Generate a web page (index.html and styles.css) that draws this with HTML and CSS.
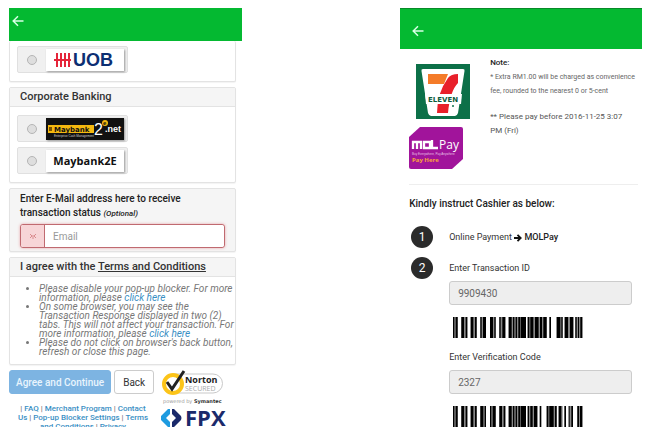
FILE: index.html
```
<!DOCTYPE html>
<html lang="en">
<head>
  <meta charset="UTF-8">
  <meta name="viewport" content="width=device-width, initial-scale=1.0">
  <title>Payment</title>
  <link rel="stylesheet" href="styles.css">
</head>
<body>
  <main class="screens">

    <!-- Online banking screen -->
    <section class="screen bank">
      <header class="topbar">
        <button type="button" class="back-arrow" aria-label="Go back">
          <svg width="12" height="12" viewBox="0 0 12 12"><path d="M11.500 6H1.500M6 1.200L1.200 6L6 10.800" fill="none" stroke="#d9ffe6" stroke-width="1.500"/></svg>
        </button>
      </header>

      <div class="panel panel-first">
        <div class="panel-body">
          <label class="bank-option">
            <span class="addon"><input type="radio" name="bank" aria-label="UOB"></span>
            <span class="logo">
              <svg width="78" height="23" viewBox="0 0 78 23">
                <path d="M11 4V18M15 4V18M19 4V18M23 4V18M8 11H25" stroke="#e5253a" stroke-width="2"/>
                <text x="27" y="17" class="uob-text">UOB</text>
              </svg>
            </span>
          </label>
        </div>
      </div>

      <div class="panel">
        <h2 class="panel-heading">Corporate Banking</h2>
        <div class="panel-body">
          <label class="bank-option">
            <span class="addon"><input type="radio" name="bank" aria-label="Maybank2e.net"></span>
            <span class="logo logo-dark">
              <svg width="78" height="21" viewBox="0 0 78 21">
                <rect x="2" y="7" width="46" height="8" fill="#f5b90f"/>
                <path d="M3 9h3v4h-3z" fill="#7a5200"/>
                <text x="8" y="14" class="maybank-text">Maybank</text>
                <text x="8" y="19" class="maybank-small">Enterprise Cash Management</text>
                <text x="48" y="17" class="maybank-two">2</text>
                <circle cx="59" cy="5" r="3" fill="#f5b90f"/>
                <text x="57" y="7" class="maybank-e">e</text>
                <text x="59" y="14" class="maybank-net">.net</text>
              </svg>
            </span>
          </label>
          <label class="bank-option">
            <span class="addon"><input type="radio" name="bank" aria-label="Maybank2E"></span>
            <span class="logo logo-text">Maybank2E</span>
          </label>
        </div>
      </div>

      <div class="panel email-panel">
        <label for="email">Enter E-Mail address here to receive transaction status <em>(Optional)</em></label>
        <div class="email-group">
          <span class="email-addon">
            <svg width="8" height="6" viewBox="0 0 8 6"><path d="M1 1L3 3L1 5M7 1L5 3L7 5M3 3H5M3 5H5" fill="none" stroke="#d98a8d" stroke-width="1"/></svg>
          </span>
          <input type="email" id="email" placeholder="Email">
        </div>
      </div>

      <div class="panel">
        <h2 class="panel-heading">I agree with the <a href="#terms">Terms and Conditions</a></h2>
        <ul class="notes">
          <li>Please disable your pop-up blocker. For more information, please <a href="#popup">click here</a></li>
          <li>On some browser, you may see the Transaction Response displayed in two (2) tabs. This will not affect your transaction. For more information, please <a href="#tabs">click here</a></li>
          <li>Please do not click on browser's back button, refresh or close this page.</li>
        </ul>
      </div>

      <div class="bottom">
        <div class="bottom-left">
          <div class="buttons">
            <button type="button" class="btn btn-primary">Agree and Continue</button>
            <button type="button" class="btn">Back</button>
          </div>
          <p class="links">| <a href="#faq">FAQ</a> | <a href="#merchant">Merchant Program</a> | <a href="#contact">Contact Us</a> | <a href="#settings">Pop-up Blocker Settings</a> | <a href="#tnc">Terms and Conditions</a> | <a href="#privacy">Privacy</a></p>
        </div>
        <div class="badges">
          <svg width="66" height="35" viewBox="0 0 66 35">
            <path d="M12 4H52A9 9 0 0 1 52 23H12" fill="#fff" stroke="#c9c9c9"/>
            <circle cx="12" cy="14" r="9" fill="#fff" stroke="#fcc419" stroke-width="4"/>
            <path d="M6 12L11 19L23 1" fill="none" stroke="#222" stroke-width="3"/>
            <text x="24" y="13" class="norton">Norton</text>
            <text x="24" y="21" class="secured">SECURED</text>
            <text x="2" y="33" class="powered">powered by <tspan class="symantec">Symantec</tspan></text>
          </svg>
          <svg width="68" height="20" viewBox="0 0 68 20">
            <path d="M9 1H7L0 8Q-1 10 0 12L7 19H9V14L5 10L9 6Z" fill="#1e9be0"/>
            <path d="M11 1H13L20 8Q21 10 20 12L13 19H11V14L15 10L11 6Z" fill="#1b2a6b"/>
            <text x="24" y="18" class="fpx">FPX</text>
          </svg>
        </div>
      </div>
    </section>

    <!-- Cash payment screen -->
    <section class="screen cash">
      <header class="topbar topbar-tall">
        <button type="button" class="back-arrow" aria-label="Go back">
          <svg width="12" height="12" viewBox="0 0 12 12"><path d="M11.500 6H1.500M6 1.200L1.200 6L6 10.800" fill="none" stroke="#d9ffe6" stroke-width="1.500"/></svg>
        </button>
      </header>

      <div class="intro">
        <div class="providers">
          <svg class="seven" width="54" height="55" viewBox="0 0 54 55">
            <rect width="54" height="55" fill="#0c7048"/>
            <path d="M7 5H47Q49 5 48.500 7L42 49Q41 52 39 52H15Q13 52 12 49L5.500 7Q5 5 7 5Z" fill="#fff"/>
            <path d="M12 10H32L28 20H12Z" fill="#f47b29"/>
            <path d="M32 14Q35 10 42 10V19Q34 27 32 49H21Q21 29 32 14Z" fill="#e8202a"/>
            <path d="M9 30H46L45 40H10Z" fill="#fff"/>
            <text x="27" y="38" class="eleven">ELEVEN</text>
            <circle cx="37" cy="42" r="1" fill="#0c7048"/>
          </svg>
          <svg width="54" height="43" viewBox="0 0 54 43">
            <path d="M11 0H52Q54 0 54 2V32L43 42H2Q0 42 0 40V10Z" fill="#a1149b"/>
            <path d="M4 22V15H12V22M8 15V22M15 15H21V21H15ZM23 13V21H29" fill="none" stroke="#fff" stroke-width="2.300"/>
            <text x="30" y="22" class="mol-pay">Pay</text>
            <text x="3" y="28" class="mol-small">Buy Everywhere, Pay Anywhere</text>
            <text x="3" y="35" class="mol-here">Pay Here</text>
          </svg>
        </div>
        <div class="note">
          <h2>Note:</h2>
          <p class="note-small">* Extra RM1.00 will be charged as convenience fee, rounded to the nearest 0 or 5-cent</p>
          <p class="note-due">** Please pay before 2016-11-25 3:07 PM (Fri)</p>
        </div>
      </div>

      <div class="steps">
        <h2>Kindly instruct Cashier as below:</h2>
        <div class="step">
          <span class="num">1</span>
          <p>Online Payment
            <svg width="8" height="8" viewBox="0 0 8 8"><path d="M0 4H6M3.500 0.800L6.700 4L3.500 7.200" fill="none" stroke="#111" stroke-width="1.800"/></svg>
            <b>MOLPay</b></p>
        </div>
        <div class="step">
          <span class="num">2</span>
          <div class="fields">
            <label for="transaction">Enter Transaction ID</label>
            <input type="text" id="transaction" value="9909430" readonly>
            <svg class="barcode" width="130" height="21" viewBox="0 0 390 63" preserveAspectRatio="none">
              <path class="bar-shade" d="M0 0h14v63h-14zM25 0h18v63h-18zM53 0h18v63h-18zM82 0h17v63h-17zM111 0h17v63h-17zM139 0h18v63h-18zM167 0h52v63h-52zM224 0h33v63h-33zM260 0h21v63h-21zM311 0h18v63h-18zM335 0h26v63h-26zM367 0h21v63h-21z"/>
              <path d="M0 0h4v63h-4zM8 0h6v63h-6zM25 0h8v63h-8zM38 0h5v63h-5zM53 0h8v63h-8zM66 0h5v63h-5zM82 0h4v63h-4zM90 0h9v63h-9zM111 0h9v63h-9zM124 0h4v63h-4zM139 0h4v63h-4zM148 0h9v63h-9zM167 0h9v63h-9zM180 0h4v63h-4zM188 0h4v63h-4zM196 0h5v63h-5zM203 0h16v63h-16zM224 0h5v63h-5zM232 0h9v63h-9zM246 0h11v63h-11zM260 0h7v63h-7zM271 0h10v63h-10zM289 0h5v63h-5zM311 0h11v63h-11zM325 0h4v63h-4zM335 0h10v63h-10zM351 0h10v63h-10zM367 0h4v63h-4zM375 0h3v63h-3zM382 0h6v63h-6z"/>
            </svg>
            <label for="verification">Enter Verification Code</label>
            <input type="text" id="verification" value="2327" readonly>
            <svg class="barcode" width="130" height="21" viewBox="0 0 390 63" preserveAspectRatio="none">
              <path class="bar-shade" d="M0 0h14v63h-14zM25 0h18v63h-18zM53 0h18v63h-18zM82 0h17v63h-17zM111 0h17v63h-17zM139 0h18v63h-18zM167 0h52v63h-52zM224 0h29v63h-29zM281 0h30v63h-30zM317 0h12v63h-12zM347 0h13v63h-13zM373 0h15v63h-15z"/>
              <path d="M0 0h4v63h-4zM8 0h6v63h-6zM25 0h8v63h-8zM38 0h5v63h-5zM53 0h8v63h-8zM66 0h5v63h-5zM82 0h9v63h-9zM95 0h4v63h-4zM111 0h4v63h-4zM119 0h9v63h-9zM139 0h8v63h-8zM152 0h5v63h-5zM167 0h9v63h-9zM180 0h4v63h-4zM188 0h4v63h-4zM196 0h5v63h-5zM203 0h16v63h-16zM224 0h4v63h-4zM232 0h7v63h-7zM243 0h10v63h-10zM260 0h5v63h-5zM281 0h5v63h-5zM289 0h13v63h-13zM306 0h5v63h-5zM317 0h8v63h-8zM334 0h5v63h-5zM347 0h3v63h-3zM355 0h5v63h-5zM373 0h5v63h-5zM381 0h7v63h-7z"/>
            </svg>
          </div>
        </div>
      </div>
    </section>

  </main>
</body>
</html>
```
FILE: styles.css
```
* {
  box-sizing: border-box;
}

body {
  margin: 0;
  background: #fff;
  font-family: Roboto, "Liberation Sans", sans-serif;
  font-size: 10px;
  color: #333;
}

h2, p, ul {
  margin: 0;
}

button, input {
  font-family: inherit;
}

a {
  color: #3a8fc4;
  text-decoration: none;
}

.screens {
  display: grid;
  grid-template-columns: 233fr 242fr;
  column-gap: 25%;
  align-items: start;
  padding: 8px 8px 0 9px;
}

/* Green bar */
.topbar {
  display: flex;
  align-items: center;
  height: 33px;
  padding: 0 3px 7px;
  background: #04b931;
}

.topbar-tall {
  height: 41px;
  padding: 3px 12px 0;
  border-top: 1px solid #078a28;
}

.back-arrow {
  display: flex;
  padding: 0;
  border: none;
  background: none;
}

/* Panels */
.panel {
  margin: 0 6px 5px 0;
  border: 1px solid #e3e3e3;
  border-radius: 2px;
  background: #fff;
  box-shadow: 0 1px 1px rgba(0, 0, 0, 0.05);
}

.panel-first {
  border-top: none;
}

.panel-heading {
  padding: 0 10px;
  border-bottom: 1px solid #e3e3e3;
  background: #f5f5f5;
  font-size: 11px;
  font-weight: 500;
  line-height: 18px;
}

.panel-heading a {
  color: #333;
  text-decoration: underline;
}

.panel-body {
  display: flex;
  flex-direction: column;
  align-items: flex-start;
  gap: 5px;
  padding: 8px 7px;
}

.panel-first .panel-body {
  padding-top: 5px;
}

.bank-option {
  display: flex;
  align-items: center;
  height: 27px;
  border: 1px solid #e0e0e0;
  border-radius: 2px;
  background: #f0f0f0;
}

.addon {
  display: flex;
  justify-content: center;
  width: 28px;
}

.addon input {
  appearance: none;
  width: 10px;
  height: 10px;
  margin: 0;
  border: 1px solid #b5b5b5;
  border-radius: 50%;
  background: #dedede;
}

.logo {
  display: flex;
  width: 78px;
  height: 22px;
  margin-right: 3px;
  background: #fff;
  box-shadow: 1px 1px 2px #999;
}

.logo-dark {
  background: #111;
}

.logo-text {
  align-items: center;
  justify-content: center;
  font-family: "Open Sans", sans-serif;
  font-size: 11px;
  font-weight: bold;
  color: #111;
}

.uob-text {
  font: bold 18px "Liberation Sans", sans-serif;
  fill: #0c2f73;
}

.maybank-text {
  font: bold 7px "DejaVu Sans", sans-serif;
  fill: #111;
}

.maybank-small {
  font: 3px "Liberation Sans", sans-serif;
  fill: #ccc;
}

.maybank-two {
  font: 16px "Liberation Sans", sans-serif;
  fill: #fff;
}

.maybank-e {
  font: bold 6px "Liberation Sans", sans-serif;
  fill: #111;
}

.maybank-net {
  font: bold 9px "Liberation Sans", sans-serif;
  fill: #fff;
}

/* Email */
.email-panel {
  padding: 3px 10px;
  background: #f5f5f5;
}

.email-panel label {
  display: block;
  margin-bottom: 3px;
  font-size: 10px;
  font-weight: 500;
  line-height: 14px;
  color: #222;
}

.email-panel em {
  font-size: 8px;
}

.email-group {
  display: flex;
  height: 24px;
  border: 1px solid #c06a70;
  border-radius: 3px;
  background: #fff;
  box-shadow: 0 0 3px #e9a5a9;
}

.email-addon {
  display: flex;
  align-items: center;
  justify-content: center;
  width: 24px;
  border-right: 1px solid #c06a70;
  border-radius: 2px 0 0 2px;
  background: #f7d5d7;
}

.email-group input {
  flex: 1;
  min-width: 0;
  padding: 0 8px;
  border: none;
  border-radius: 3px;
  font-size: 10px;
}

.email-group input::placeholder {
  color: #999;
}

.notes {
  padding: 7px 0 8px 29px;
  font-size: 10px;
  font-style: italic;
  line-height: 9px;
  color: #777;
}

/* Buttons, links and badges */
.bottom {
  display: flex;
  gap: 8px;
}

.bottom-left {
  width: 144px;
}

.buttons {
  display: flex;
  gap: 3px;
}

.btn {
  height: 24px;
  padding: 0 8px;
  border: 1px solid #ccc;
  border-radius: 3px;
  background: #fff;
  font-size: 10px;
  color: #333;
  white-space: nowrap;
}

.btn-primary {
  padding: 0 6px;
  border-color: #7db4e2;
  background: #7db4e2;
  color: #e9f4fd;
  font-weight: 500;
}

.links {
  max-height: 23px;
  margin-top: 10px;
  padding: 0 2px 0 6px;
  overflow: hidden;
  font-size: 8px;
  font-weight: 500;
  line-height: 9px;
  text-align: center;
  color: #777;
}

.badges {
  display: flex;
  flex-direction: column;
  gap: 3px;
}

.badges svg {
  display: block;
}

.norton {
  font: bold 9px "Open Sans", sans-serif;
  fill: #222;
}

.secured {
  font: 7px "Open Sans", sans-serif;
  fill: #aaa;
}

.powered {
  font: 5px "DejaVu Sans", sans-serif;
  fill: #999;
}

.symantec {
  font-weight: bold;
  fill: #333;
}

.fpx {
  font: bold 22px "Open Sans", sans-serif;
  fill: #1b2a6b;
}

/* Cash screen */
.intro {
  display: flex;
  gap: 20px;
  margin: 0 4px 0 9px;
  padding: 7px 0 14px;
  border-bottom: 1px solid #eee;
}

.providers {
  display: flex;
  flex-direction: column;
  gap: 8px;
  padding-top: 8px;
}

.providers svg {
  display: block;
}

.seven {
  margin-left: 7px;
}

.eleven {
  font: bold 7px "DejaVu Sans", sans-serif;
  fill: #0c5c3c;
  text-anchor: middle;
}

.mol-pay {
  font: 12px "Open Sans", sans-serif;
  fill: #fff;
}

.mol-small {
  font: 3px "Liberation Sans", sans-serif;
  fill: #e8c4e6;
}

.mol-here {
  font: bold 6px "Open Sans", sans-serif;
  fill: #f9a23c;
}

.note {
  flex: 1;
  line-height: 14px;
}

.note h2 {
  font-size: 8px;
  font-weight: 500;
  line-height: 14px;
  color: #222;
}

.note-small {
  font-size: 7px;
  color: #666;
}

.note-due {
  margin-top: 12px;
  padding-right: 8px;
  font-size: 8px;
  color: #555;
}

.steps {
  padding: 11px 10px 0 9px;
}

.steps h2 {
  margin-bottom: 14px;
  font-size: 10px;
  font-weight: 500;
  line-height: 16px;
  color: #222;
}

.step {
  display: flex;
  gap: 16px;
  margin-bottom: 9px;
  font-size: 9px;
  line-height: 22px;
}

.num {
  flex: none;
  width: 22px;
  height: 22px;
  margin-left: 2px;
  border-radius: 50%;
  background: #2b2b2b;
  color: #fff;
  font-size: 12px;
  text-align: center;
}

.step p svg {
  vertical-align: middle;
}

.step b {
  font-weight: 500;
  color: #222;
}

.fields {
  display: flex;
  flex: 1;
  flex-direction: column;
  min-width: 0;
}

.fields input {
  width: 100%;
  height: 24px;
  margin-top: 2px;
  padding: 0 8px;
  border: 1px solid #ccc;
  border-radius: 3px;
  background: #eee;
  font-size: 10px;
  color: #666;
}

.barcode {
  margin: 12px 4px 8px;
}

.bar-shade {
  fill: #888;
}
```
